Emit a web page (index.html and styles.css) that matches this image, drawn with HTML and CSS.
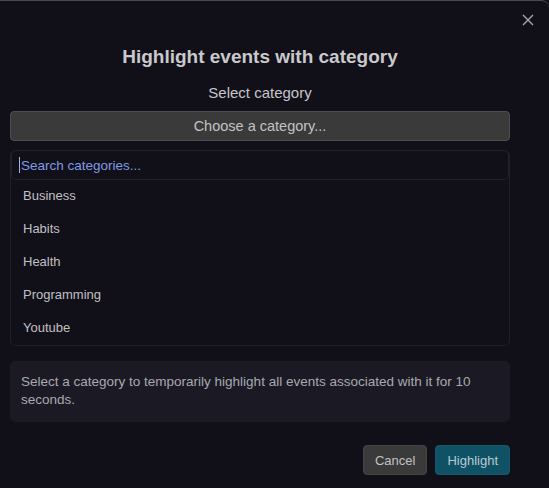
FILE: index.html
```html
<!DOCTYPE html>
<html lang="en">
  <head>
    <meta charset="UTF-8" />
    <meta name="viewport" content="width=device-width, initial-scale=1.0" />
    <title>Highlight events with category</title>
    <link rel="stylesheet" href="styles.css">
  </head>
  <body>
    <div class="dialog">
      <button class="close" aria-label="Close">
        <svg width="12" height="12" viewBox="0 0 12 12">
          <path d="M1 1L11 11M11 1L1 11" stroke="currentColor" stroke-width="1.4" fill="none" />
        </svg>
      </button>

      <h2 class="title">Highlight events with category</h2>

      <!-- 分类选择 -->
      <div class="field">
        <label class="field-label">Select category</label>
        <button class="picker">Choose a category...</button>
        <div class="dropdown">
          <div class="search-wrap">
            <span class="caret"></span>
            <input class="search" type="text" placeholder="Search categories..." />
          </div>
          <ul class="options">
            <li>Business</li>
            <li>Habits</li>
            <li>Health</li>
            <li>Programming</li>
            <li>Youtube</li>
          </ul>
        </div>
      </div>

      <p class="hint">Select a category to temporarily highlight all events associated with it for 10 seconds.</p>

      <div class="actions">
        <button class="btn">Cancel</button>
        <button class="btn primary">Highlight</button>
      </div>
    </div>
  </body>
</html>
```

FILE: styles.css
```css
html,
body {
  margin: 0;
  height: 100%;
  background: #111019;
}
body {
  font-family: "Liberation Sans", Arial, sans-serif;
  color: #c4c4c8;
  overflow: hidden;
}
.dialog {
  position: relative;
  box-sizing: border-box;
  height: 100%;
  padding: 0 39px 0 10px;
  border-top: 1px solid #4a4a50;
  border-top-right-radius: 8px;
  background: #111019;
}
.close {
  position: absolute;
  top: 13px;
  right: 15px;
  padding: 0;
  border: none;
  background: none;
  color: #a9a9ae;
  cursor: pointer;
}
.title {
  margin: 0;
  padding-top: 45px;
  text-align: center;
  font-size: 19px;
  font-weight: bold;
  line-height: 22px;
  color: #c9c9cc;
}
.field {
  margin-top: 16px;
}
.field-label {
  display: block;
  text-align: center;
  font-size: 15px;
  line-height: 18px;
  color: #c6c6ca;
}
.picker {
  display: block;
  width: 100%;
  height: 30px;
  margin-top: 9px;
  border: 1px solid #4b4d4f;
  border-radius: 4px;
  background: #3a3a3a;
  color: #c2c2c2;
  font: 14.5px "Liberation Sans", Arial, sans-serif;
}
.dropdown {
  margin-top: 9px;
  padding-bottom: 1px;
  border: 1px solid #1b202a;
  border-radius: 5px;
}
.search-wrap {
  position: relative;
  margin-top: -1px;
}
/* 输入框聚焦时的光标 */
.caret {
  position: absolute;
  left: 8px;
  top: 7px;
  width: 1px;
  height: 16px;
  background: #9fb3ee;
}
.search {
  display: block;
  box-sizing: border-box;
  width: 100%;
  height: 30px;
  margin: 0;
  padding: 0 9px;
  border: 1px solid #1d222c;
  border-radius: 5px;
  background: transparent;
  outline: none;
  color: #c4c4c8;
  font: 13.5px "Liberation Sans", Arial, sans-serif;
}
.search::placeholder {
  color: #7e9be6;
}
.options {
  list-style: none;
  margin: -1px 0 0;
  padding: 0 0 0 12px;
}
.options li {
  height: 33px;
  line-height: 33px;
  font-size: 13px;
  color: #c0c0c4;
}
.hint {
  margin: 15px 0 0;
  padding: 12px 11px 13px;
  border-radius: 5px;
  background: #1b1a24;
  font-size: 13.5px;
  line-height: 18px;
  color: #a9a9b0;
}
.actions {
  display: flex;
  justify-content: flex-end;
  gap: 8px;
  margin-top: 23px;
}
.btn {
  height: 30px;
  padding: 0 11px;
  border: 1px solid #444;
  border-radius: 4px;
  background: #3a3a3a;
  color: #c2c2c2;
  font: 13px "Liberation Sans", Arial, sans-serif;
}
.btn.primary {
  border-color: #145a6e;
  background: #0f5266;
  color: #b9c9cf;
}
```
